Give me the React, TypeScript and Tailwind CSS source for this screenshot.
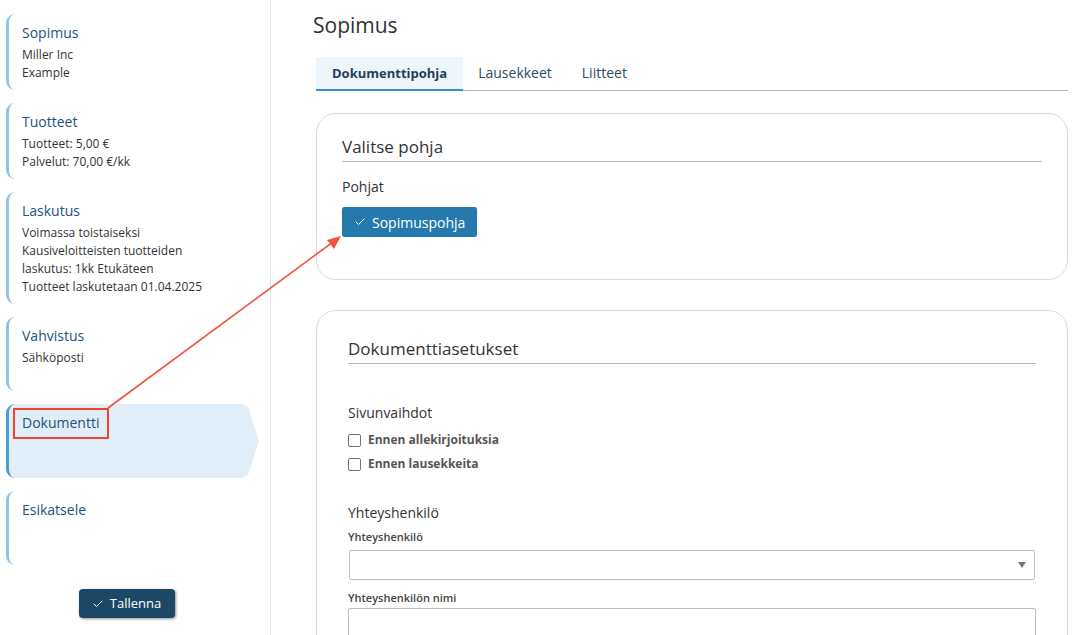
import { Check } from "lucide-react";

const steps = [
  { title: "Sopimus", lines: ["Miller Inc", "Example"] },
  { title: "Tuotteet", lines: ["Tuotteet: 5,00 €", "Palvelut: 70,00 €/kk"] },
  {
    title: "Laskutus",
    lines: [
      "Voimassa toistaiseksi",
      "Kausiveloitteisten tuotteiden",
      "laskutus: 1kk Etukäteen",
      "Tuotteet laskutetaan 01.04.2025",
    ],
  },
  { title: "Vahvistus", lines: ["Sähköposti"] },
  { title: "Dokumentti", lines: [], active: true },
  { title: "Esikatsele", lines: [] },
];

function Sidebar() {
  return (
    <div className="w-[271px] shrink-0 border-r border-[#e6e8ea] pl-[6px] pt-[14px]">
      <div className="flex w-[241px] flex-col gap-[13px]">
        {steps.map((s) => (
          <div
            key={s.title}
            className={`relative min-h-[74px] rounded-l-[9px] rounded-r-[6px] border-l-[3px] pb-[8px] pl-[13px] pt-[9px] ${
              s.active ? "border-[#4c9fd3] bg-[#e1edf7]" : "border-[#90c5e6]"
            }`}
          >
            {s.active && (
              <div className="absolute -right-[12px] top-0 h-0 w-0 border-y-[37px] border-l-[12px] border-y-transparent border-l-[#e1edf7]" />
            )}
            <div className="text-[14px] leading-[20px] text-[#22527f]">{s.title}</div>
            {s.lines.length > 0 && (
              <div className="mt-[3px] text-[12px] leading-[18px] text-[#333]">
                {s.lines.map((l) => (
                  <div key={l}>{l}</div>
                ))}
              </div>
            )}
          </div>
        ))}
      </div>
      <div className="flex w-[241px] justify-center pt-[24px]">
        <button className="flex h-[29px] w-[96px] items-center justify-center gap-[6px] rounded-[4px] bg-[#1c4766] text-[13px] text-white shadow-[1px_1px_3px_rgba(0,0,0,0.45)]">
          <Check className="h-[12px] w-[12px]" strokeWidth={2} />
          Tallenna
        </button>
      </div>
    </div>
  );
}

function Tabs() {
  return (
    <div className="mt-[18px] flex border-b border-[#aab5bb]">
      <div className="-mb-px border-b-2 border-[#3b8fd0] bg-[#eef5fb] px-[16px] py-[8px] text-[13px] font-bold leading-[16px] text-[#1f3f5f]">
        Dokumenttipohja
      </div>
      <div className="px-[15px] py-[8px] text-[14px] leading-[16px] text-[#2b4a63]">Lausekkeet</div>
      <div className="px-[15px] py-[8px] text-[14px] leading-[16px] text-[#2b4a63]">Liitteet</div>
    </div>
  );
}

function CheckRow({ label }: { label: string }) {
  return (
    <div className="flex h-[24px] items-center gap-[7px]">
      <div className="h-[13px] w-[13px] rounded-[2px] border border-[#767676] bg-white" />
      <span className="text-[12px] font-bold text-[#555]">{label}</span>
    </div>
  );
}

export default function App() {
  return (
    <div
      className="relative flex h-[635px] w-[1073px] overflow-hidden bg-white text-[#333]"
      style={{ fontFamily: '"Open Sans", "Noto Sans", sans-serif' }}
    >
      <Sidebar />
      <div className="flex-1 pl-[45px] pr-[5px] pt-[11px]">
        <h1 className="-ml-[3px] text-[21px] leading-[28px] text-[#333]">Sopimus</h1>
        <Tabs />

        <div className="mt-[22px] rounded-[20px] border border-[#d9dcde] px-[25px] pb-[42px] pt-[21px]">
          <div className="border-b border-[#b3bcc0] pb-[2px] text-[17px] leading-[24px] text-[#333]">
            Valitse pohja
          </div>
          <div className="mt-[15px] text-[14px] leading-[20px]">Pohjat</div>
          <button className="mt-[10px] flex h-[30px] items-center gap-[6px] rounded-[3px] bg-[#2579ad] px-[12px] text-[14px] text-white shadow-[0_0_1px_rgba(0,0,0,0.3)]">
            <Check className="h-[12px] w-[12px]" strokeWidth={2} />
            Sopimuspohja
          </button>
        </div>

        <div className="mt-[30px] rounded-[20px] border border-[#d9dcde] px-[31px] pb-[30px] pt-[26px]">
          <div className="border-b border-[#b3bcc0] pb-[2px] text-[17px] leading-[24px] text-[#333]">
            Dokumenttiasetukset
          </div>
          <div className="mt-[39px] text-[14px] leading-[20px]">Sivunvaihdot</div>
          <div className="mt-[5px]">
            <CheckRow label="Ennen allekirjoituksia" />
            <CheckRow label="Ennen lausekkeita" />
          </div>
          <div className="mt-[27px] text-[14px] leading-[20px]">Yhteyshenkilö</div>
          <div className="mt-[6px] text-[11px] font-semibold leading-[16px] text-[#444]">Yhteyshenkilö</div>
          <div className="mt-[5px] ml-px mr-px flex h-[30px] items-center justify-end rounded-[2px] border border-[#b8c0c4] pr-[8px]">
            <svg width="8" height="6" viewBox="0 0 8 6">
              <path d="M0 0h8L4 6z" fill="#777" />
            </svg>
          </div>
          <div className="mt-[10px] text-[11px] font-semibold leading-[16px] text-[#444]">
            Yhteyshenkilön nimi
          </div>
          <div className="mt-[2px] h-[34px] rounded-[2px] border border-[#b8c0c4]" />
        </div>
      </div>

      {/* annotation overlay */}
      <div className="pointer-events-none absolute left-[13px] top-[408px] h-[31px] w-[96px] border-2 border-[#ee4430]" />
      <svg className="pointer-events-none absolute left-0 top-0" width="1073" height="635">
        <line x1="108" y1="408" x2="333" y2="242" stroke="#f0553c" strokeWidth="1.6" />
        <path d="M341 236 L327 240 L334 249 Z" fill="#f0553c" />
      </svg>
    </div>
  );
}
